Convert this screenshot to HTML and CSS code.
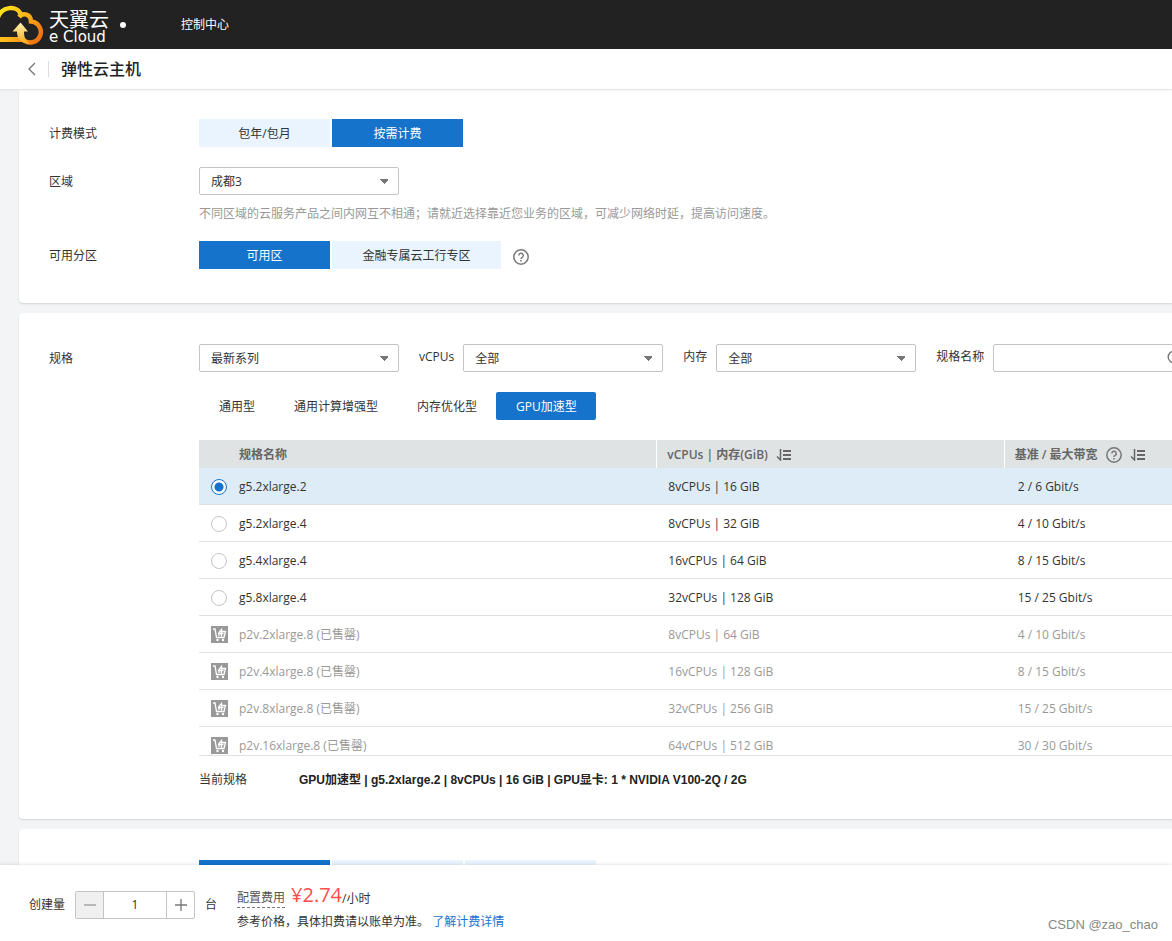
FILE: index.html
```html
<!DOCTYPE html>
<html lang="zh-CN">
<head>
<meta charset="utf-8">
<title>弹性云主机</title>
<link rel="stylesheet" href="styles.css">
</head>
<body>
<svg class="sprite" aria-hidden="true">
  <symbol id="help" viewBox="0 0 16 16"><circle cx="8" cy="8" r="7.2" fill="none" stroke="currentColor" stroke-width="1.500"/><path d="M5.800 6.400a2.200 2.200 0 1 1 3.300 1.900c-.8.4-1.100.8-1.100 1.600" fill="none" stroke="currentColor" stroke-width="1.500"/><path d="M7.200 11h1.600v1.500H7.200z" fill="currentColor"/></symbol>
  <symbol id="sort" viewBox="0 0 16 12"><path d="M4.500 0v11L1 7.500" fill="none" stroke="currentColor" stroke-width="1.500"/><path d="M7 2h8M7 6h8M7 10h8" stroke="currentColor" stroke-width="2"/></symbol>
  <symbol id="cart" viewBox="0 0 17 17"><path d="M0 0h17v17H0z" fill="#999"/><path d="M2 3h2l1.500 8.500h7.500l1.500-6h-4M8 10V6.500l2.500-3v7M7 7.500h5.500" fill="none" stroke="#fff" stroke-width="1.300"/><circle cx="6.500" cy="14" r="1.200" fill="#fff"/><circle cx="12" cy="14" r="1.200" fill="#fff"/></symbol>
</svg>
<header class="topbar">
  <a class="logo" href="#">
    <svg class="logo-mark" viewBox="0 0 45 40" aria-hidden="true">
      <defs>
        <linearGradient id="gold" gradientUnits="userSpaceOnUse" x1="0" y1="4" x2="42" y2="34"><stop offset="0" stop-color="#ffe619"/><stop offset=".5" stop-color="#fbb21a"/><stop offset="1" stop-color="#ee6a10"/></linearGradient>
        <linearGradient id="arrow" x1="0" y1="0" x2="0" y2="1"><stop offset="0" stop-color="#fff6b0"/><stop offset="1" stop-color="#f9a61a"/></linearGradient>
      </defs>
      <path d="M-3 15C1 0 18 0 21 10" fill="none" stroke="url(#gold)" stroke-width="4.500"/>
      <path d="M19 12c4-5 12-3 12 4.500a10.500 10.500 0 1 1-8 18" fill="none" stroke="url(#gold)" stroke-width="4.500"/>
      <path d="M-2 34.500h24" stroke="url(#gold)" stroke-width="5"/>
      <path d="M20.500 17.500l7.500 9h-4c0 5 1 9 6 12.500-9 0-13-5-13-12.500h-4.500z" fill="url(#arrow)"/>
    </svg>
    <span class="logo-words"><span class="logo-cn">天翼云</span><span class="logo-en">e Cloud</span></span>
  </a>
  <span class="dot"></span>
  <a class="nav-link" href="#">控制中心</a>
</header>
<div class="titlebar">
  <button class="back" type="button" aria-label="返回"><svg viewBox="0 0 8 14" aria-hidden="true"><path d="M7 1L1 7l6 6" fill="none" stroke="currentColor" stroke-width="1.400"/></svg></button>
  <h1>弹性云主机</h1>
</div>
<main>
  <section class="card basics">
    <div class="row"><span class="label">计费模式</span>
      <div class="segment"><button type="button">包年/包月</button><button type="button" class="active">按需计费</button></div>
    </div>
    <div class="row"><label class="label" for="region">区域</label>
      <div><select id="region"><option>成都3</option></select><p class="hint">不同区域的云服务产品之间内网互不相通；请就近选择靠近您业务的区域，可减少网络时延，提高访问速度。</p></div>
    </div>
    <div class="row"><span class="label">可用分区</span>
      <div class="segment"><button type="button" class="active">可用区</button><button type="button" class="wide">金融专属云工行专区</button></div>
      <svg class="help spaced" role="img" aria-label="帮助"><use href="#help"/></svg>
    </div>
  </section>
  <section class="card specs">
    <div class="row"><label class="label" for="series">规格</label>
      <div class="spec-body">
        <div class="filters">
          <select id="series"><option>最新系列</option></select>
          <label for="cpus">vCPUs</label><select id="cpus"><option>全部</option></select>
          <label for="memory">内存</label><select id="memory"><option>全部</option></select>
          <label for="spec-name">规格名称</label>
          <span class="search"><input id="spec-name" type="text"><svg viewBox="0 0 16 16" aria-hidden="true"><circle cx="7" cy="7" r="5.800" fill="none" stroke="#777" stroke-width="1.400"/><path d="M11 11l4 4" stroke="#777" stroke-width="1.400"/></svg></span>
        </div>
        <div class="types"><button type="button">通用型</button><button type="button">通用计算增强型</button><button type="button">内存优化型</button><button type="button" class="active">GPU加速型</button></div>
        <div class="table-wrap">
          <table>
            <colgroup><col class="col-name"><col class="col-cpu"><col></colgroup>
            <thead><tr><th>规格名称</th><th><span class="head">vCPUs | 内存(GiB)<svg class="sort"><use href="#sort"/></svg></span></th><th><span class="head">基准 / 最大带宽<svg class="help"><use href="#help"/></svg><svg class="sort"><use href="#sort"/></svg></span></th></tr></thead>
            <tbody>
              <tr class="selected"><td><label><input type="radio" name="spec" checked>g5.2xlarge.2</label></td><td>8vCPUs | 16 GiB</td><td>2 / 6 Gbit/s</td></tr>
              <tr><td><label><input type="radio" name="spec">g5.2xlarge.4</label></td><td>8vCPUs | 32 GiB</td><td>4 / 10 Gbit/s</td></tr>
              <tr><td><label><input type="radio" name="spec">g5.4xlarge.4</label></td><td>16vCPUs | 64 GiB</td><td>8 / 15 Gbit/s</td></tr>
              <tr><td><label><input type="radio" name="spec">g5.8xlarge.4</label></td><td>32vCPUs | 128 GiB</td><td>15 / 25 Gbit/s</td></tr>
              <tr class="sold"><td><span class="name"><svg><use href="#cart"/></svg>p2v.2xlarge.8 (已售罄)</span></td><td>8vCPUs | 64 GiB</td><td>4 / 10 Gbit/s</td></tr>
              <tr class="sold"><td><span class="name"><svg><use href="#cart"/></svg>p2v.4xlarge.8 (已售罄)</span></td><td>16vCPUs | 128 GiB</td><td>8 / 15 Gbit/s</td></tr>
              <tr class="sold"><td><span class="name"><svg><use href="#cart"/></svg>p2v.8xlarge.8 (已售罄)</span></td><td>32vCPUs | 256 GiB</td><td>15 / 25 Gbit/s</td></tr>
              <tr class="sold"><td><span class="name"><svg><use href="#cart"/></svg>p2v.16xlarge.8 (已售罄)</span></td><td>64vCPUs | 512 GiB</td><td>30 / 30 Gbit/s</td></tr>
            </tbody>
          </table>
        </div>
        <div class="current"><span>当前规格</span><strong>GPU加速型 | g5.2xlarge.2 | 8vCPUs | 16 GiB | GPU显卡: 1 * NVIDIA V100-2Q / 2G</strong></div>
      </div>
    </div>
  </section>
  <section class="card next">
    <div class="row"><span class="label"></span><div class="segment"><button type="button" class="active" aria-label="选项一"></button><button type="button" aria-label="选项二"></button><button type="button" aria-label="选项三"></button></div></div>
  </section>
</main>
<footer>
  <label for="count">创建量</label>
  <div class="stepper"><button type="button" disabled aria-label="减少"><svg viewBox="0 0 12 12"><path d="M0 6h12" stroke="currentColor" stroke-width="1.300"/></svg></button><input id="count" type="text" value="1"><button type="button" aria-label="增加"><svg viewBox="0 0 12 12"><path d="M0 6h12M6 0v12" stroke="currentColor" stroke-width="1.300"/></svg></button></div>
  <span class="unit">台</span>
  <div class="cost">
    <div class="price"><span class="fee">配置费用</span><span class="amount">¥2.74</span><span>/小时</span></div>
    <div>参考价格，具体扣费请以账单为准。 <a href="#">了解计费详情</a></div>
  </div>
  <span class="watermark">CSDN @zao_chao</span>
</footer>
</body>
</html>
```
FILE: styles.css
```css
* { box-sizing: border-box; }
body { margin: 0; height: 100vh; display: flex; flex-direction: column; overflow: hidden; background: #f3f4f6; color: #333; font: 12px/18px "Open Sans", "Noto Sans CJK SC", sans-serif; }
button, input, select { font: inherit; color: inherit; margin: 0; }
button { border: 0; padding: 1px 16px 0; background: none; }
a { text-decoration: none; color: #1673cc; }
.sprite { display: none; }

.topbar { flex: none; height: 49px; display: flex; align-items: center; background: #222; }
.logo { display: flex; align-items: center; gap: 4px; color: #fff; }
.logo-mark { width: 45px; height: 40px; }
.logo-words { display: flex; flex-direction: column; padding-top: 4px; }
.logo-cn { font-size: 20px; line-height: 20px; }
.logo-en { font: 15px/14px "DejaVu Sans", sans-serif; }
.dot { width: 6px; height: 6px; margin-left: 11px; border-radius: 50%; background: #fff; }
.nav-link { margin-left: 55px; color: #fff; }

.titlebar { flex: none; height: 41px; display: flex; align-items: center; background: #fff; border-bottom: 1px solid #e4e6e8; box-shadow: 0 1px 2px #0000000d; position: relative; z-index: 1; }
.back { height: 16px; padding: 0 12px 0 28px; border-right: 1px solid #ddd; color: #777; }
.back svg { display: block; width: 8px; height: 14px; }
h1 { margin: 0 0 0 12px; font-size: 16px; line-height: 24px; font-weight: 500; color: #222; }

main { flex: 1; min-height: 0; overflow: hidden; padding-left: 19px; display: flex; flex-direction: column; gap: 10px; }
.card { flex: none; background: #fff; border-radius: 4px 0 0 4px; box-shadow: 0 1px 2px #00000024; padding-left: 30px; }
.basics { padding-top: 29px; padding-bottom: 34px; display: flex; flex-direction: column; gap: 20px; border-top-left-radius: 0; }
.row { display: flex; align-items: flex-start; }
.label { width: 150px; flex: none; line-height: 30px; height: 28px; }
.segment { display: flex; gap: 2px; }
.segment button { width: 131px; height: 28px; background: #e9f4fe; }
.segment .wide { width: 169px; }
.segment .active, .types .active { background: #1673cc; color: #fff; }
select, .search input { display: block; width: 200px; height: 28px; border: 1px solid #c4c4c4; border-radius: 2px; background: #fff; padding: 1px 11px 0; }
select { appearance: none; background: #fff conic-gradient(from -45deg at 50% 100%, #777 90deg, transparent 0) right 10px top 11px / 8px 5px no-repeat; }
.hint { margin: 10px 0 0; line-height: 18px; height: 16px; color: #999; }
.help { width: 16px; height: 16px; color: #777; }
.spaced { margin: 8px 0 0 12px; }

.specs { padding-top: 31px; padding-bottom: 30px; }
.spec-body { flex: 1; min-width: 0; overflow: hidden; }
.filters { display: flex; align-items: center; }
.filters > * { flex: none; }
.filters label { margin: 0 9px 2px 20px; }
.search { position: relative; }
.search svg { position: absolute; right: 10px; top: 6px; width: 16px; height: 16px; }
.types { display: flex; margin: 20px 0; }
.types button { height: 28px; padding: 1px 19px 0 20px; border-radius: 2px; }
.table-wrap { height: 316px; overflow: hidden; border-bottom: 1px solid #dfe1e2; }
table { width: 100%; table-layout: fixed; border-collapse: separate; border-spacing: 0; }
.col-name { width: 47%; }
.col-cpu { width: 35.7%; }
th { height: 28px; padding: 2px 10px 0; background: #dfe3e3; color: #666; text-align: left; font-weight: 600; white-space: nowrap; }
th + th { border-left: 1px solid #fff; }
th:first-child { padding-left: 40px; }
td { height: 37px; padding: 1px 12px 0; border-bottom: 1px solid #dfe1e2; }
td:last-child { padding-left: 14px; }
.head { display: flex; align-items: center; gap: 8px; }
.sort { width: 16px; height: 12px; }
td label, .name { display: flex; align-items: center; gap: 12px; }
td input { appearance: none; width: 16px; height: 16px; border: 1px solid #c4c4c4; border-radius: 50%; background: #fff; }
td input:checked { border-color: #1673cc; background: radial-gradient(#1673cc 4px, #fff 5px); }
.name svg { width: 17px; height: 17px; margin-right: -1px; }
.selected { background: #deecf8; }
.sold { color: #999; }
.current { display: flex; margin-top: 15px; }
.current span { width: 100px; }
.current strong { font-family: "Liberation Sans", "Noto Sans CJK SC", sans-serif; font-weight: 600; color: #222; }
.next { padding-top: 31px; }

footer { flex: none; height: 76px; display: flex; align-items: center; padding: 4px 14px 0 29px; background: #fff; box-shadow: 0 -1px 3px #0000001a; position: relative; z-index: 1; }
.stepper { display: flex; width: 120px; height: 28px; margin: 0 10px; border: 1px solid #c4c4c4; border-radius: 2px; }
.stepper button { width: 27px; padding: 0; display: grid; place-items: center; color: #777; }
.stepper button:disabled { background: #f0f0f0; color: #999; }
.stepper svg { width: 12px; height: 12px; }
.stepper input { flex: 1; min-width: 0; border: solid #c4c4c4; border-width: 0 1px; padding: 0; text-align: center; }
.unit { margin-right: 20px; }
.cost { margin-top: 5px; }
.price { display: flex; align-items: flex-end; margin-bottom: 5px; }
.fee { border-bottom: 1px dashed #777; color: #555; }
.amount { margin: 0 0 2px 6px; font-size: 20px; line-height: 22px; color: #ff4c4c; }
.watermark { margin-left: auto; align-self: flex-end; margin-bottom: 6px; font: 13px/20px "Liberation Sans", sans-serif; color: #888; }
```
